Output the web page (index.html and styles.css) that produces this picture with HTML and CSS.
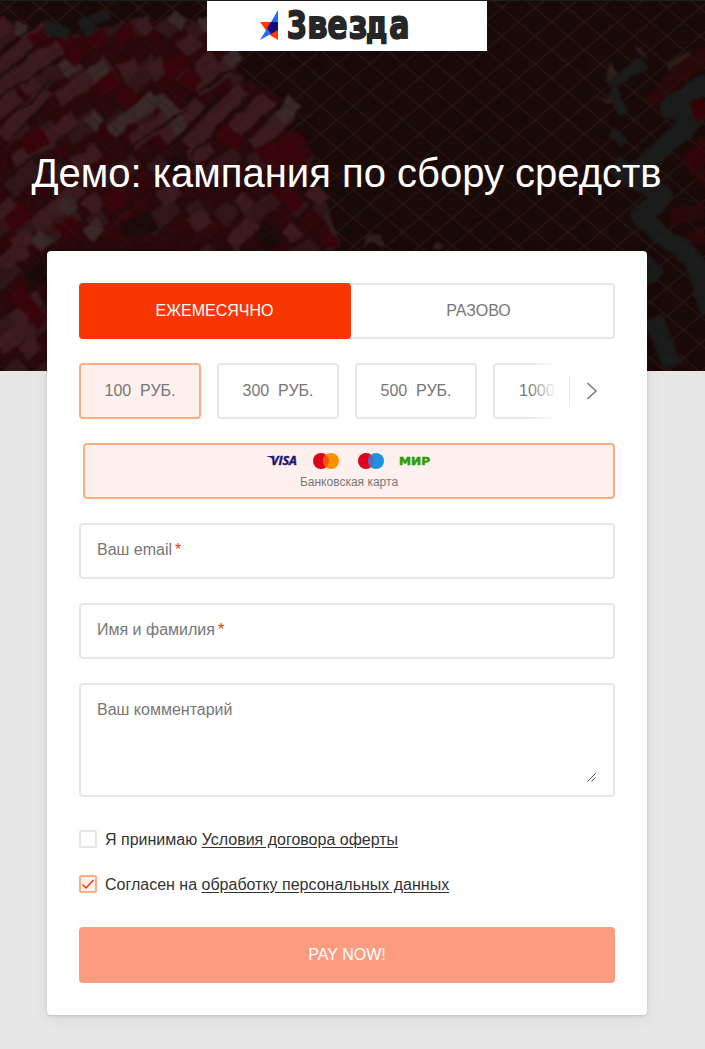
FILE: index.html
```html
<!DOCTYPE html>
<html lang="ru">
<head>
<meta charset="utf-8">
<title>Звезда</title>
<link rel="stylesheet" href="styles.css">
</head>
<body>
<header class="hero">
  <svg class="hero-art" viewBox="0 0 705 371" aria-hidden="true">
    <defs>
      <pattern id="fence" width="33" height="28" patternUnits="userSpaceOnUse" patternTransform="translate(7 8)">
        <path d="M0 0L33 28M33 0L0 28" stroke="#2a1714" stroke-width="1.2" fill="none"/>
      </pattern>
      <pattern id="tiles" width="80" height="60" patternUnits="userSpaceOnUse" patternTransform="rotate(-41)">
        <path fill="#220a0a" d="M0 0h80v60H0z"/>
        <path fill="#30070b" d="M1 1h18v18H1zM41 1h18v18H41zM21 21h18v18H21zM61 41h18v18H61z"/>
        <path fill="#33161a" d="M21 1h18v18H21zM41 21h38v18H41zM1 41h18v18H1z"/>
        <path fill="#2b090c" d="M61 1h18v18H61zM1 21h18v18H1zM21 41h38v18H21z"/>
      </pattern>
      <filter id="rough" x="-5%" y="-5%" width="110%" height="110%" color-interpolation-filters="sRGB">
        <feTurbulence type="fractalNoise" baseFrequency=".05" numOctaves="2" seed="8" result="n"/>
        <feDisplacementMap in="SourceGraphic" in2="n" scale="9" xChannelSelector="R" yChannelSelector="G"/>
        <feGaussianBlur stdDeviation=".8"/>
      </filter>
      <filter id="grain" x="0" y="0" width="100%" height="100%">
        <feTurbulence type="fractalNoise" baseFrequency=".16" numOctaves="3" seed="3"/>
        <feColorMatrix values="0 0 0 0 0  0 0 0 0 0  0 0 0 0 0  1.4 0 0 0 -.48"/>
      </filter>
    </defs>
    <path fill="#1a0b09" d="M0 0h705v371H0z"/>
    <path fill="url(#fence)" opacity=".85" d="M0 0h705v371H0z"/>
    <g filter="url(#rough)">
      <path fill="url(#tiles)" d="M-10 10L14 25L22 15L30 30L62 38L92 30L130 20L142 16L160 20L186 14L209 34L243 57L234 73L274 91L297 112L286 131L306 137L314 157L300 190L321 195L333 217L340 241L325 260L0 390z"/>
      <g transform="scale(.3333)" fill="none" stroke-width="50">
        <path stroke="#3d1c20" d="M-20 110L25 70M-20 220L140 85M-20 285L195 125M-20 345L55 285M65 270L100 240M10 415L140 270M175 300L330 190M40 490L230 355M365 220L410 190M450 225L495 190M395 430L520 340M485 415L600 310M600 210L640 170M585 270L700 190M560 440L735 265M695 400L810 290M760 440L870 330M545 150L590 115M415 90L455 60M0 650L50 610M110 680L240 560M260 625L300 590M40 740L100 700M0 800L70 740M40 965L120 895M0 1040L90 980M70 1060L110 1025M690 735L760 670M715 625L750 590M860 715L890 690M940 600L970 570M575 680L620 645M570 480L630 435M225 500L290 450M480 600L530 560"/>
        <path stroke="#3b2a28" d="M335 395L470 290M475 290L555 390M185 215L230 180M265 230L320 195M835 355L885 305M185 635L220 600M260 705L305 670M110 745L140 700M520 80L545 45M600 80L645 55M680 190L710 160M45 85L80 90M265 380L300 345" stroke-width="46"/>
        <path stroke="#3a050a" d="M95 130L140 105M180 135L215 105M270 135L315 105M350 125L400 90M205 180L250 140M300 270L350 230M355 310L400 270M495 220L560 180M550 260L590 220M70 450L130 400M320 620L380 570M180 700L220 665M360 680L400 650M780 475L910 410M830 560L900 620M970 710L1010 720M40 875L130 970M800 500L920 470M660 390L720 430M20 675L80 630"/>
        <path stroke="#1d0b0b" stroke-width="60" d="M370 690L470 660M100 785L120 860M780 680L830 740M520 480L560 520"/>
        <path stroke="#1b0c0b" stroke-width="6" d="M-20 245L190 80M-20 310L215 145M0 445L150 300M20 525L240 375M370 455L560 330M510 440L680 270M570 470L745 285M720 430L850 300M-20 180L110 70M60 330L160 240M545 310L670 220M620 260L720 200"/>
        <g stroke="#1b1d1c">
          <path stroke-width="36" d="M130 80L210 105M250 50L270 100M270 60L330 35M1820 260L1930 190M1830 270L1870 340M1830 400L1880 430"/>
          <path stroke-width="60" stroke-linejoin="round" d="M2125 240L2005 325L2090 350L1900 530L1990 590L1920 650L2080 780L2130 940M1920 760L1970 840M1960 950L2020 1100M1840 490L1910 550"/>
        </g>
        <path stroke="#2a090a" stroke-width="46" d="M2125 150L1940 315M2120 420L2070 480L2130 560M2120 630L2010 650M2120 700L2060 720"/>
        <path stroke="#350408" stroke-width="62" d="M2120 330L2080 330M2120 460L2060 480"/>
        <path fill="#32201d" stroke="none" d="M1825 180L1855 215L1825 245zM1900 135L1925 140L1938 178zM2005 200L2030 165L2075 160L2010 220zM1780 285L1840 300L1825 312zM1085 750L1100 705L1140 700L1160 750L1110 725zM1305 750L1310 725L1330 730L1330 750zM970 655L985 640L1020 700L1010 710z"/>
      </g>
    </g>
    <path filter="url(#grain)" opacity=".12" d="M0 0h705v371H0z"/>
    <path fill="url(#fence)" opacity=".35" d="M0 0h705v371H0z"/>
    <path fill="#1b1e20" d="M0 0h705v1H0z"/>
  </svg>
  <div class="brand">
    <svg width="280" height="50" viewBox="0 0 280 50" role="img" aria-label="Звезда">
      <path fill="#ff3a00" d="M53 21h18v18L62 33.5z"/>
      <path fill="#256aff" d="M71 9V29L53 39L64 21z"/>
      <path fill="#180c77" d="M64 21h7v8L64 33L60 27z"/>
      <g class="wordmark" transform="scale(.88 1)">
        <text y="37.5" x="91 115 137 160.5 181.5 207">Звезда</text>
      </g>
    </svg>
  </div>
  <h1 class="title">Демо: кампания по сбору средств</h1>
</header>
<main class="card">
  <div class="tabs">
    <div class="tab tab-active">ЕЖЕМЕСЯЧНО</div>
    <div class="tab tab-once">РАЗОВО</div>
  </div>
  <div class="amounts">
    <div class="amount selected">100&nbsp; РУБ.</div>
    <div class="amount">300&nbsp; РУБ.</div>
    <div class="amount">500&nbsp; РУБ.</div>
    <div class="amount">1000&nbsp; РУБ.</div>
    <div class="next">
      <svg width="46" height="32" viewBox="0 0 46 32"><path d="M.5 0v32" stroke="#e7e7e7"/><path d="M18.5 8L27 16L18.5 24" fill="none" stroke="#777" stroke-width="1.5"/></svg>
    </div>
  </div>
  <div class="method selected">
    <svg width="168" height="18" viewBox="0 0 168 18">
      <text class="visa" x="6" y="13" textLength="26" lengthAdjust="spacingAndGlyphs">VISA</text>
      <path fill="#201371" d="M1 4h6l2 4Q6 5 1 4z"/>
      <circle cx="56" cy="9" r="8" fill="#df0019"/><circle cx="66" cy="9" r="8" fill="#f79100"/>
      <path fill="#fa5300" d="M61 2.75a8 8 0 0 1 0 12.5a8 8 0 0 1 0-12.5"/>
      <circle cx="101" cy="9" r="8" fill="#df0019"/><circle cx="111" cy="9" r="8" fill="#2091df"/>
      <path fill="#6962b7" d="M106 2.75a8 8 0 0 1 0 12.5a8 8 0 0 1 0-12.5"/>
      <text class="mir" x="134" y="13" textLength="31" lengthAdjust="spacingAndGlyphs">МИР</text>
    </svg>
    <span>Банковская карта</span>
  </div>
  <div class="field">Ваш email<b>*</b></div>
  <div class="field">Имя и фамилия<b>*</b></div>
  <div class="field comment">Ваш комментарий
    <svg class="grip" width="9" height="9" viewBox="0 0 9 9"><path d="M.5 8.5l8-8M4.5 8.5l4-4" stroke="#555"/></svg>
  </div>
  <div class="checks">
    <div class="check"><span class="box"></span><span class="terms">Я принимаю <u>Условия договора оферты</u></span></div>
    <div class="check"><span class="box selected"><svg width="14" height="14" viewBox="0 0 14 14"><path d="M1.5 7.5L5 11L12.5 3" fill="none" stroke="#f83600" stroke-width="1.5"/></svg></span><span class="terms">Согласен на <u>обработку персональных данных</u></span></div>
  </div>
  <div class="pay">PAY NOW!</div>
</main>
</body>
</html>
```
FILE: styles.css
```css
* { box-sizing: border-box; }
body {
  margin: 0;
  height: 1049px;
  overflow: hidden;
  background: #e7e7e7;
  font: 16px/20px "Liberation Sans", Arial, sans-serif;
  color: #333;
}
.hero {
  position: relative;
  height: 371px;
  padding: 1px 11px 0 0;
  display: flex;
  flex-direction: column;
  align-items: center;
}
.hero-art {
  position: absolute;
  inset: 0;
  width: 100%;
  height: 371px;
}
.brand {
  position: relative;
  width: 280px;
  height: 50px;
  background: #fff;
}
.brand svg { display: block; }
.wordmark {
  font: bold 37px "DejaVu Sans Mono", monospace;
  fill: #262626;
  stroke: #262626;
  stroke-width: 2.2px;
  stroke-linejoin: miter;
}
.title {
  position: relative;
  margin: 98px 1px 0 0;
  font-size: 40px;
  line-height: 48px;
  font-weight: normal;
  white-space: nowrap;
  color: #fff;
}
.card {
  position: relative;
  width: 600px;
  height: 764px;
  margin: -120px 0 0 47px;
  padding: 32px;
  display: flex;
  flex-direction: column;
  gap: 24px;
  border-radius: 4px;
  background: #fff;
  box-shadow: 0 1px 3px rgba(0, 0, 0, .15), 0 4px 18px rgba(0, 0, 0, .06);
}
.tabs {
  display: flex;
  height: 56px;
  border-radius: 4px;
  box-shadow: inset 0 0 0 2px #e7e7e7;
}
.tab {
  display: flex;
  align-items: center;
  justify-content: center;
  width: 264px;
  padding-bottom: 1px;
  color: #777;
}
.tab-active {
  width: 272px;
  padding-right: 1px;
  border-radius: 4px;
  background: #f83600;
  color: #fff;
}
.tab-once { padding-right: 9px; }
.amounts {
  position: relative;
  display: flex;
  gap: 16px;
  height: 56px;
  overflow: hidden;
}
.amount {
  display: flex;
  align-items: center;
  justify-content: center;
  flex: 0 0 122px;
  padding-bottom: 1px;
  border: 2px solid #e7e7e7;
  border-radius: 4px;
  color: #777;
  white-space: nowrap;
}
.amount:nth-child(4) {
  justify-content: flex-start;
  padding-left: 24px;
}
.amount.selected, .method.selected, .box.selected {
  border-color: #fcae83;
  background: #fef1ed;
}
.next {
  position: absolute;
  top: 0;
  right: 0;
  width: 86px;
  height: 56px;
  display: flex;
  align-items: center;
  justify-content: flex-end;
  background: linear-gradient(90deg, rgba(255, 255, 255, 0), #fff 28px);
}
.method {
  display: flex;
  flex-direction: column;
  align-items: center;
  height: 56px;
  margin-left: 4px;
  padding: 7px 0 0;
  border: 2px solid #fcae83;
  border-radius: 4px;
  font-size: 12px;
  line-height: 25px;
  color: #777;
}
.method svg { flex: none; }
.visa {
  font: italic bold 12px "Open Sans", sans-serif;
  fill: #201371;
  stroke: #201371;
  stroke-width: .4px;
}
.mir {
  font: bold 11px "DejaVu Sans", sans-serif;
  fill: #309c00;
  stroke: #309c00;
  stroke-width: .5px;
}
.field {
  height: 56px;
  flex: none;
  padding: 15px 16px;
  border: 2px solid #e7e7e7;
  border-radius: 4px;
  color: #777;
}
.field b {
  margin-left: 3px;
  font-weight: normal;
  color: #f83600;
}
.comment {
  position: relative;
  height: 114px;
}
.grip {
  position: absolute;
  right: 17px;
  bottom: 13px;
}
.checks {
  display: flex;
  flex-direction: column;
  gap: 25px;
  margin-top: 8px;
}
.check {
  display: flex;
  align-items: center;
  gap: 8px;
  height: 20px;
}
.terms { padding-top: 2px; }
.box {
  flex: none;
  width: 18px;
  height: 18px;
  border: 2px solid #e7e7e7;
  border-radius: 2px;
}
.box svg { display: block; }
.check u { text-underline-offset: 2px; }
.pay {
  height: 56px;
  flex: none;
  margin-top: 9px;
  padding-top: 18px;
  border-radius: 4px;
  background: #fb9b80;
  text-align: center;
  color: #fff;
}
```
